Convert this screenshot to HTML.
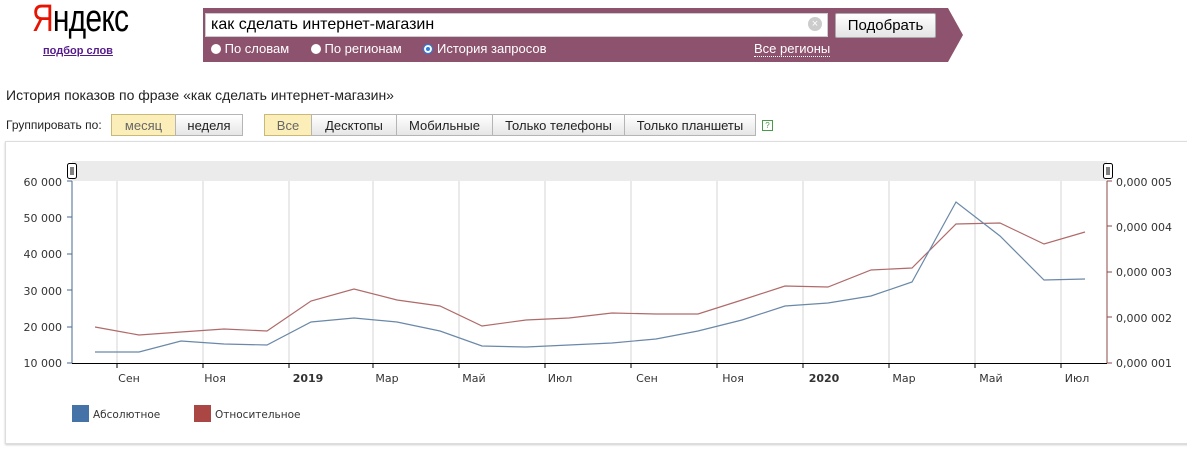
<!DOCTYPE html><html><head><meta charset="utf-8"><style>
body{margin:0;width:1187px;height:455px;background:#fff;font-family:"Liberation Sans",Arial,sans-serif;position:relative;overflow:hidden}
.a{position:absolute}
.btn{position:absolute;height:22px;top:114px;border:1px solid #b5b5b5;background:linear-gradient(#fff,#e6e6e6);font-size:13px;line-height:22px;text-align:center;color:#222;box-sizing:border-box}
.on{background:#fbeeb8;color:#666;border-color:#c9b978}
svg text{font-family:"DejaVu Sans",Verdana,sans-serif;font-size:11px;fill:#333}
</style></head><body>
<div class="a" style="left:32px;top:-2px;font-size:38px;letter-spacing:-1px;transform:scaleX(.79);transform-origin:left"><span style="color:#e61400">Я</span>ндекс</div>
<div class="a" style="left:43px;top:45px;font-size:11px;font-weight:bold;color:#551a8b;text-decoration:underline">подбор слов</div>
<svg class="a" style="left:203px;top:8px" width="762" height="54"><polygon points="0,0 745,0 760,27 745,54 0,54" fill="#8d526d"/></svg>
<div class="a" style="left:205px;top:13px;width:623px;height:24px;background:#fff;border:1px solid #ccc;box-sizing:border-box;font-size:16px;line-height:22px;padding-left:5px">как сделать интернет-магазин</div>
<div class="a" style="left:808px;top:17px;width:14px;height:14px;border-radius:50%;background:#ccc;color:#fff;font-size:11px;line-height:14px;text-align:center">×</div>
<div class="a" style="left:835px;top:13px;width:101px;height:25px;border:1px solid #aaa;border-radius:2px;background:linear-gradient(#fff,#e4e4e4);font-size:15px;line-height:24px;text-align:center;box-sizing:border-box">Подобрать</div>
<div class="a" style="left:211px;top:41px;font-size:13px;color:#fff;white-space:pre"><span style="display:inline-block;width:10px;height:10px;border-radius:50%;background:#fff;vertical-align:-1px"></span> По словам      <span style="display:inline-block;width:10px;height:10px;border-radius:50%;background:#fff;vertical-align:-1px"></span> По регионам      <span style="display:inline-block;width:8px;height:8px;border-radius:50%;background:#fff;border:1px solid #2a7ee0;box-shadow:inset 0 0 0 2px #fff;background:#2a7ee0;vertical-align:-1px"></span> История запросов</div>
<div class="a" style="left:754px;top:41px;font-size:13px;color:#fff;border-bottom:1px dotted #fff;line-height:15px">Все регионы</div>
<div class="a" style="left:6px;top:87px;font-size:14px;color:#222">История показов по фразе «как сделать интернет-магазин»</div>
<div class="a" style="left:6px;top:118px;font-size:12px;color:#222">Группировать по:</div>
<div class="btn on" style="left:111px;width:65px">месяц</div>
<div class="btn" style="left:175px;width:68px">неделя</div>
<div class="btn on" style="left:264px;width:48px">Все</div>
<div class="btn" style="left:311px;width:86px">Десктопы</div>
<div class="btn" style="left:396px;width:97px">Мобильные</div>
<div class="btn" style="left:492px;width:133px">Только телефоны</div>
<div class="btn" style="left:624px;width:132px">Только планшеты</div>
<div class="a" style="left:762px;top:120px;width:9px;height:9px;border:1px solid #4a9a4a;font-size:8px;line-height:9px;text-align:center;color:#4a9a4a">?</div>
<div class="a" style="left:5px;top:141px;width:1190px;height:301px;border:1px solid #ddd;box-shadow:0 1px 2px #ccc"></div>
<svg class="a" style="left:0;top:0" width="1187" height="455">
<rect x="72" y="161" width="1035" height="20" fill="#ebebeb"/>
<g stroke="#d6d6d6"><line x1="117" y1="181" x2="117" y2="363"/><line x1="203" y1="181" x2="203" y2="363"/><line x1="289" y1="181" x2="289" y2="363"/><line x1="373" y1="181" x2="373" y2="363"/><line x1="459" y1="181" x2="459" y2="363"/><line x1="545" y1="181" x2="545" y2="363"/><line x1="631" y1="181" x2="631" y2="363"/><line x1="717" y1="181" x2="717" y2="363"/><line x1="803" y1="181" x2="803" y2="363"/><line x1="889" y1="181" x2="889" y2="363"/><line x1="975" y1="181" x2="975" y2="363"/><line x1="1061" y1="181" x2="1061" y2="363"/></g>
<line x1="72" y1="181" x2="72" y2="363" stroke="#4a6890"/>
<line x1="1107" y1="181" x2="1107" y2="363" stroke="#8b4a4a"/>
<line x1="72" y1="363.5" x2="1107" y2="363.5" stroke="#000"/>
<g stroke="#4a6890"><line x1="67" y1="181" x2="72" y2="181"/><line x1="67" y1="217" x2="72" y2="217"/><line x1="67" y1="254" x2="72" y2="254"/><line x1="67" y1="290" x2="72" y2="290"/><line x1="67" y1="327" x2="72" y2="327"/><line x1="67" y1="363" x2="72" y2="363"/></g>
<g stroke="#8b4a4a"><line x1="1107" y1="181" x2="1112" y2="181"/><line x1="1107" y1="226" x2="1112" y2="226"/><line x1="1107" y1="272" x2="1112" y2="272"/><line x1="1107" y1="317" x2="1112" y2="317"/><line x1="1107" y1="363" x2="1112" y2="363"/></g>
<g stroke="#000"><line x1="117" y1="363" x2="117" y2="368"/><line x1="203" y1="363" x2="203" y2="368"/><line x1="289" y1="363" x2="289" y2="368"/><line x1="373" y1="363" x2="373" y2="368"/><line x1="459" y1="363" x2="459" y2="368"/><line x1="545" y1="363" x2="545" y2="368"/><line x1="631" y1="363" x2="631" y2="368"/><line x1="717" y1="363" x2="717" y2="368"/><line x1="803" y1="363" x2="803" y2="368"/><line x1="889" y1="363" x2="889" y2="368"/><line x1="975" y1="363" x2="975" y2="368"/><line x1="1061" y1="363" x2="1061" y2="368"/></g>
<g text-anchor="end"><text x="62" y="186">60 000</text><text x="62" y="222">50 000</text><text x="62" y="258">40 000</text><text x="62" y="295">30 000</text><text x="62" y="331">20 000</text><text x="62" y="367">10 000</text></g>
<g><text x="1116" y="186">0,000 005</text><text x="1116" y="231">0,000 004</text><text x="1116" y="276">0,000 003</text><text x="1116" y="322">0,000 002</text><text x="1116" y="367">0,000 001</text></g>
<g text-anchor="middle"><text x="129" y="382">Сен</text><text x="215" y="382">Ноя</text><text x="308" y="382" style="font-weight:bold">2019</text><text x="387" y="382">Мар</text><text x="474" y="382">Май</text><text x="560" y="382">Июл</text><text x="647" y="382">Сен</text><text x="733" y="382">Ноя</text><text x="824" y="382" style="font-weight:bold">2020</text><text x="904" y="382">Мар</text><text x="991" y="382">Май</text><text x="1077" y="382">Июл</text></g>
<polyline fill="none" stroke="#b06a6a" stroke-width="1.2" points="95,327 139,335 181,332 224,329 267,331 311,301 354,289 397,300 440,306 482,326 526,320 569,318 612,313 656,314 698,314 742,300 785,286 828,287 871,270 912,268 956,224 1000,223 1044,244 1085,232"/>
<polyline fill="none" stroke="#6a88a8" stroke-width="1.2" points="95,352 139,352 181,341 224,344 267,345 311,322 354,318 397,322 440,331 482,346 526,347 569,345 612,343 656,339 698,331 742,320 785,306 828,303 871,296 912,282 956,202 1000,236 1044,280 1085,279"/>
<rect x="67.5" y="163.5" width="9" height="15" rx="2" fill="#fff" stroke="#000"/><line x1="71" y1="167" x2="71" y2="175" stroke="#000"/><line x1="73" y1="167" x2="73" y2="175" stroke="#000"/>
<rect x="1103.5" y="163.5" width="9" height="15" rx="2" fill="#fff" stroke="#000"/><line x1="1107" y1="167" x2="1107" y2="175" stroke="#000"/><line x1="1109" y1="167" x2="1109" y2="175" stroke="#000"/>
<rect x="72" y="405" width="17" height="17" fill="#4572a7"/><text x="93" y="418" style="font-size:10.5px">Абсолютное</text>
<rect x="194" y="405" width="17" height="17" fill="#aa4643"/><text x="215" y="418" style="font-size:10.5px">Относительное</text>
</svg>
</body></html>
